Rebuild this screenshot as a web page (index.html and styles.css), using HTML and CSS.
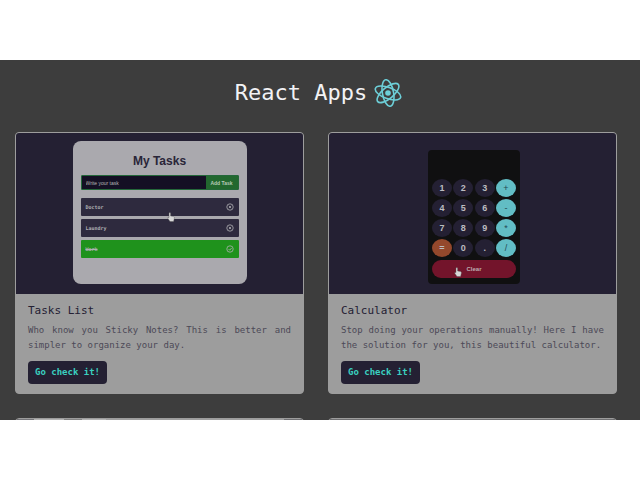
FILE: index.html
```
<!DOCTYPE html>
<html lang="en">
<head>
<meta charset="utf-8">
<title>React Apps</title>
<link rel="stylesheet" href="styles.css">
</head>
<body>
<main class="stage">
  <header class="header">
    <h1 class="title">React Apps</h1>
    <svg class="logo" viewBox="0 0 28 28" fill="none" stroke="#6dcfd8" stroke-width="1.6" aria-hidden="true">
      <g transform="rotate(20 14 14)">
        <ellipse cx="14" cy="14" rx="13.4" ry="5.6"/>
        <ellipse cx="14" cy="14" rx="13.4" ry="5.6" transform="rotate(60 14 14)"/>
        <ellipse cx="14" cy="14" rx="13.4" ry="5.6" transform="rotate(120 14 14)"/>
      </g>
      <circle cx="14" cy="14" r="2.8" fill="#6dcfd8" stroke="none"/>
    </svg>
  </header>
  <section class="cards">
    <article class="card">
      <div class="preview">
        <div class="tasks">
          <h2 class="tasks-title">My Tasks</h2>
          <div class="task-form">
            <input class="task-input" type="text" placeholder="Write your task" aria-label="Write your task">
            <button class="task-add" type="button">Add Task</button>
          </div>
          <ul class="task-list">
            <li class="task">Doctor
              <svg class="task-icon" viewBox="0 0 8 8" fill="none" stroke="currentColor" stroke-width=".8"><circle cx="4" cy="4" r="3.2"/><path d="M2.8 2.8l2.4 2.4M5.2 2.8L2.8 5.2"/></svg>
              <svg class="pointer pointer-task" viewBox="0 0 8 10"><path d="M2 1q1-1 1.6 0v3l3 .6q1 .3.8 1.4L6.6 9.6H3L.6 6q0-1 1.4-.4z" fill="#d8d8d8" stroke="#555" stroke-width=".4"/></svg>
            </li>
            <li class="task">Laundry
              <svg class="task-icon" viewBox="0 0 8 8" fill="none" stroke="currentColor" stroke-width=".8"><circle cx="4" cy="4" r="3.2"/><path d="M2.8 2.8l2.4 2.4M5.2 2.8L2.8 5.2"/></svg>
            </li>
            <li class="task task-done"><s>Work</s>
              <svg class="task-icon" viewBox="0 0 8 8" fill="none" stroke="currentColor" stroke-width=".8"><circle cx="4" cy="4" r="3.2"/><path d="M2.5 4l1.2 1.2L5.6 3"/></svg>
            </li>
          </ul>
        </div>
      </div>
      <div class="card-body">
        <h2 class="card-title">Tasks List</h2>
        <p class="card-text">Who know you Sticky Notes? This is better and simpler to organize your day.</p>
        <a class="card-link" href="#tasks">Go check it!</a>
      </div>
    </article>
    <article class="card">
      <div class="preview">
        <div class="calculator">
          <div class="keys">
            <button class="key">1</button><button class="key">2</button><button class="key">3</button><button class="key key-op">+</button>
            <button class="key">4</button><button class="key">5</button><button class="key">6</button><button class="key key-op">-</button>
            <button class="key">7</button><button class="key">8</button><button class="key">9</button><button class="key key-op">*</button>
            <button class="key key-equals">=</button><button class="key">0</button><button class="key">.</button><button class="key key-op">/</button>
          </div>
          <button class="clear" type="button">Clear
            <svg class="pointer pointer-clear" viewBox="0 0 8 10"><path d="M2 1q1-1 1.6 0v3l3 .6q1 .3.8 1.4L6.6 9.6H3L.6 6q0-1 1.4-.4z" fill="#d8d8d8" stroke="#555" stroke-width=".4"/></svg>
          </button>
        </div>
      </div>
      <div class="card-body">
        <h2 class="card-title">Calculator</h2>
        <p class="card-text">Stop doing your operations manually! Here I have the solution for you, this beautiful calculator.</p>
        <a class="card-link" href="#calculator">Go check it!</a>
      </div>
    </article>
    <article class="card"><div class="preview preview-page"></div></article>
    <article class="card"><div class="preview preview-gray"></div></article>
  </section>
</main>
</body>
</html>
```
FILE: styles.css
```
* {
  box-sizing: border-box;
}

body {
  margin: 0;
  min-height: 100vh;
  display: flex;
  flex-direction: column;
  justify-content: center;
  background: #fff;
  font-family: "DejaVu Sans Mono", monospace;
}

h1, h2, p, ul {
  margin: 0;
  padding: 0;
}

button, input {
  margin: 0;
  padding: 0;
  border: 0;
}

.stage {
  aspect-ratio: 16 / 9;
  overflow: hidden;
  background: #3d3d3d;
}

.header {
  display: flex;
  align-items: center;
  justify-content: center;
  gap: 7px;
  padding: 18px 3px 24px 0;
}

.title {
  font-size: 22px;
  line-height: 30px;
  font-weight: 400;
  color: #f2f2f5;
}

.logo {
  width: 28px;
  height: 28px;
}

.cards {
  display: grid;
  grid-template-columns: 1fr 1fr;
  gap: 24px;
  padding: 0 23px 0 15px;
}

.card {
  border: 1px solid #9d9d9d;
  border-radius: 4px;
  background: #9d9d9d;
  overflow: hidden;
}

.preview {
  aspect-ratio: 16 / 9;
  display: flex;
  align-items: flex-start;
  justify-content: center;
  background: #242033;
  font-family: "Liberation Sans", sans-serif;
}

.preview-page {
  background: linear-gradient(90deg, #77777b 0 18px, #b5b5b5 18px 48px, #858585 48px 66px, #b5b5b5 66px 90px, #a0a0a0 90px 268px, #717174 268px);
}

.preview-gray {
  background: #717173;
}

.tasks {
  width: 174px;
  margin-top: 8px;
  padding: 12px 8px 26px;
  border-radius: 8px;
  background: #aaa9ae;
}

.tasks-title {
  font-size: 12px;
  line-height: 16px;
  text-align: center;
  color: #292538;
}

.task-form {
  display: flex;
  margin: 6px 0 8px;
  height: 15px;
  border: 1px solid #24683a;
  border-radius: 1px;
  background: #141024;
}

.task-input {
  flex: 1;
  min-width: 0;
  padding-left: 4px;
  background: transparent;
  font: 5px "Liberation Sans", sans-serif;
  color: #b5b5b5;
}

.task-input::placeholder {
  color: #b5b5b5;
}

.task-add {
  width: 32px;
  background: #22682f;
  color: #b8c8b8;
  font: bold 5px "Liberation Sans", sans-serif;
}

.task-list {
  display: grid;
  gap: 3px;
  list-style: none;
}

.task {
  position: relative;
  display: flex;
  align-items: center;
  justify-content: space-between;
  height: 18px;
  padding: 0 5px;
  border-radius: 1px;
  background: #2e2a3e;
  color: #b0b0b4;
  font: bold 5px "DejaVu Sans Mono", monospace;
}

.task-done {
  background: #1f921c;
}

.task-icon {
  width: 8px;
  height: 8px;
}

.pointer {
  position: absolute;
  z-index: 1;
  width: 8px;
  height: 10px;
}

.pointer-task {
  left: 86px;
  top: 14px;
}

.calculator {
  width: 92px;
  margin: 17px 0 0 3px;
  padding: 29px 4px 6px;
  border-radius: 4px;
  background: #101011;
}

.keys {
  display: grid;
  grid-template-columns: repeat(4, 20px);
  justify-content: space-between;
  row-gap: 2px;
  margin-bottom: 3px;
}

.key {
  height: 18px;
  border-radius: 50%;
  background: #242033;
  color: #bcbcc0;
  font: bold 9px/18px "Liberation Sans", sans-serif;
}

.key-op {
  background: #62bdc4;
  color: #244a54;
  font-weight: 400;
}

.key-equals {
  background: #94482c;
}

.clear {
  position: relative;
  display: block;
  width: 100%;
  height: 18px;
  border-radius: 9px;
  background: #73142b;
  color: #bcaeb2;
  font: bold 6px "Liberation Sans", sans-serif;
}

.pointer-clear {
  left: 22px;
  top: 7px;
}

.card-body {
  padding: 9px 12px;
}

.card-title {
  font-size: 11px;
  line-height: 16px;
  font-weight: 400;
  color: #242033;
}

.card-text {
  margin: 4px 0 8px;
  font-size: 9px;
  line-height: 15px;
  text-align: justify;
  color: #4c4957;
}

.card-link {
  display: inline-block;
  vertical-align: top;
  padding: 4px 7px;
  border-radius: 4px;
  background: #242033;
  color: #3ad0c0;
  font-size: 9px;
  line-height: 15px;
  font-weight: 700;
  text-decoration: none;
}
```
